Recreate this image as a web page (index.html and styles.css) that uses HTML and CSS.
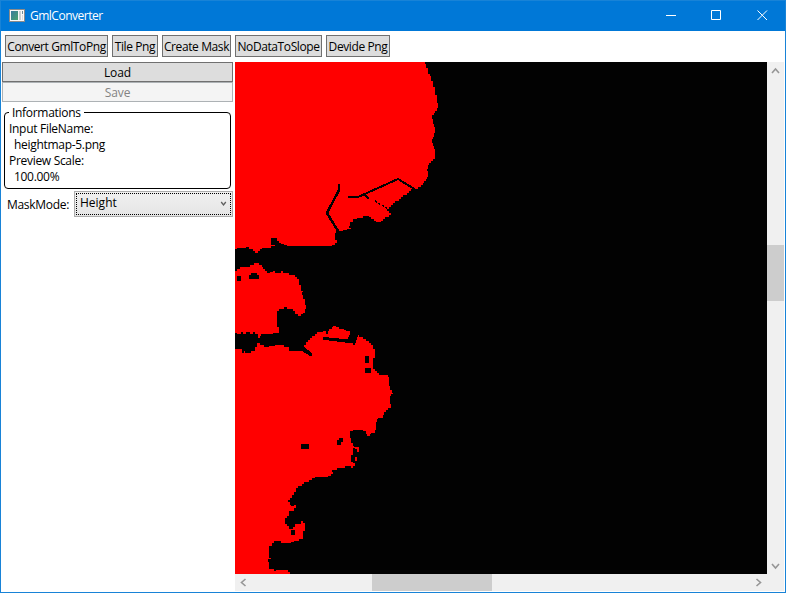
FILE: index.html
```
<!DOCTYPE html>
<html lang="en">
<head>
<meta charset="utf-8">
<title>GmlConverter</title>
<link rel="stylesheet" href="styles.css">
</head>
<body>
<div class="window">
  <header class="titlebar">
    <svg class="app-icon" width="16" height="14" viewBox="0 0 16 14" shape-rendering="crispEdges">
      <defs><linearGradient id="pane" x2="1" y2="1"><stop stop-color="#397b9e"/><stop offset="1" stop-color="#49a36f"/></linearGradient></defs>
      <path fill="#8b8b8b" d="M0 0h16v13H0z"/><path fill="#f8f8f8" d="M1 1h14v11H1z"/>
      <path fill="url(#pane)" d="M2 2h7v9H2z"/><path fill="#c9d0d2" d="M10 2h2v9h-2z"/><path fill="#6d8d98" d="M13 2h1v3h-1z"/><path fill="#dcdcdc" d="M13 6h1v5h-1z"/>
    </svg>
    <h1 class="title">GmlConverter</h1>
    <div class="caption-buttons">
      <svg viewBox="0 0 46 30" width="46" height="30"><path d="M10 14.500h10"/></svg>
      <svg viewBox="0 0 46 30" width="46" height="30"><path d="M9.500 9.500h9v9h-9z"/></svg>
      <svg viewBox="0 0 46 30" width="46" height="30"><path d="M9.500 9.500l9.500 9.500M19 9.500l-9.500 9.500"/></svg>
    </div>
  </header>
  <nav class="toolbar">
    <button class="tool convert">Convert GmlToPng</button>
    <button class="tool tile">Tile Png</button>
    <button class="tool mask">Create Mask</button>
    <button class="tool slope">NoDataToSlope</button>
    <button class="tool devide">Devide Png</button>
  </nav>
  <main class="content">
    <aside class="sidebar">
      <button class="wide load">Load</button>
      <button class="wide save" disabled>Save</button>
      <section class="group">
        <h2 class="legend"><span>Informations</span></h2>
        <p>Input FileName:</p>
        <p class="value">heightmap-5.png</p>
        <p>Preview Scale:</p>
        <p class="value">100.00%</p>
      </section>
      <div class="mode">
        <span class="mode-label">MaskMode:</span>
        <div class="combo"><span class="combo-text">Height</span>
          <svg class="chevron" width="7" height="6" viewBox="0 0 7 6"><path d="M1.200 1l2.300 3L5.800 1"/></svg>
        </div>
      </div>
    </aside>
    <section class="preview">
      <svg class="map" width="532" height="512" viewBox="235 62 532 512" shape-rendering="crispEdges">
        <path class="sea" d="M235 62h532v512H235z"/>
        <g class="land">
          <path d="M235 62H425V64H426V68H428V74H430V76H431V81H433V87H435V95H437V103H438V108H437V111H435V113H434V115H432V119H433V124H434V127H435V133H434V137H433V139H432V143H433V146H434V149H435V159H433V161H431V163H429V165H428V169H427V171H428V177H427V179H426V181H424V183H423V185H421V187H418V189H411V191H409V193H407V195H403V197H401V199H399V201H395V203H393V205H391V207H389V209H387V211H389V213H391V215H389V217H385V219H383V221H381V222H376V221H374V219H371V217H369V216H363V218H357V219H353V222H350V226H349V228H351V229H347V230H343V231H336V233H335V240H337V243H335V245H332V246H287V245H284V244H281V243H279V241H277V238H271V245H275V246H271V248H262V249H260V251H258V253H255V251H253V249H249V247H246V248H237V249H235Z"/>
          <path d="M235 271H237V269H240V267H250V265H254V263H259V265H262V267H263V269H265V271H267V273H270V272H273V271H275V273H281V271H283V273H289V275H295V277H297V279H299V285H301V291H303V292H302V295H303V299H305V305H306V309H305V313H303V314H301V316H298V314H295V311H293V309H287V307H284V309H279V311H277V327H279V333H273V334H261V336H260V338H258V334H255V332H253V334H250V332H246V334H243V332H241V334H237V333H235Z"/>
          <path d="M235 349H242V353H244V351H245V353H251V351H255V347H257V343H260V345H264V347H269V346H275V345H284V347H289V351H302L310 356H312V353L304 347V345H306V342H308V340H310V338H312V336H315V334H317V332H323V331H326V334H328V331H329V329H332V327H333V326H336V327H339V329H344V330H346V331H350V335H349V337H348V339H347V343H353V345H355V343H356V340H357V337H358V335H359V337H363V339H366V341H369V343H371V345H373V349H375V358H373V369H375V371H377V373H379V375H388V377H389V386H390V390H392V393H393V394H391V396H390V404H391V408H388V410H386V412H384V415H383V418H378V419H377V422H376V430H375V433H371V434H370V436H367V434H366V431H363V430H353V431H350V438H351V443H353V446H354V447H359V452H357V449H355V448H353V455H351V462H353V463H355V466H353V468H351V466H345V468H337V470H332V472H333V474H331V476H328V477H315V478H312V480H309V482H304V484H302V486H298V488H296V492H294V495H292V498H290V500H288V502H290V505H291V506H294V505H296V508H294V511H289V516H287V518H285V524H287V526H289V529H293V527H295V524H301V521H303V523H305V531H303V539H299V541H294V542H291V543H281V541H274V543H272V546H269V558H271V559H268V562H269V569H274V571H276V570H288V572H290V574H235Z"/>
          <path d="M355 457h2v4h-2z"/>
        </g>
        <g class="holes">
          <path d="M271 238h6v7h-6zM237 276h4v5h-4zM249 275h2v-2h6v2h2v4h-10zM365 356h4v7h-4zM365 368h6v5h-6zM301 444h8v5h-8zM339 438h4v4h-2v3h-4v-5h2zM291 530h4v5h-4z"/>
          <path d="M323 337H329V338H339V339H348V343H345V342H337V341H329V340H323Z"/>
        </g>
        <g class="roads">
          <path d="M339 184V190L327 213L338 231" stroke-width="2.500"/>
          <path d="M348 197H358L398 179L416 190" stroke-width="2"/>
          <path d="M361 195H365L369 199" stroke-width="1.700"/>
          <path d="M375 201L388 209" stroke-width="1.400" stroke-dasharray="2.500 1.500"/>
        </g>
      </svg>
      <div class="vbar">
        <svg width="18" height="17" viewBox="0 0 18 17"><path d="M5 11l3.500-4 3.500 4"/></svg>
        <div class="vthumb"></div>
        <svg width="18" height="17" viewBox="0 0 18 17"><path d="M5 7l3.500 4L12 7"/></svg>
      </div>
      <div class="hbar">
        <svg width="17" height="17" viewBox="0 0 17 17"><path d="M10.500 5l-4 3.500 4 3.500"/></svg>
        <div class="hthumb"></div>
        <svg width="17" height="17" viewBox="0 0 17 17"><path d="M6.500 5l4 3.500-4 3.500"/></svg>
      </div>
      <div class="corner"></div>
    </section>
  </main>
</div>
</body>
</html>
```
FILE: styles.css
```
* { box-sizing: border-box; }
body { margin: 0; background: #fff; font: 12px/16px "Open Sans", "Noto Sans", sans-serif; color: #000; overflow: hidden; }
h1, h2, p { margin: 0; font: inherit; }
button { font: inherit; color: inherit; padding: 0; margin: 0; border: 1px solid #707070; background: #ddd; white-space: nowrap; }
svg { display: block; flex: none; }
.window { width: 786px; height: 593px; border: 1px solid #1883d7; display: flex; flex-direction: column; }
.titlebar { height: 30px; background: #0078d7; color: #fff; display: flex; align-items: center; padding-left: 8px; flex: none; }
.title { margin-left: 5px; letter-spacing: -.5px; }
.caption-buttons { margin-left: auto; display: flex; }
.caption-buttons svg { width: 46px; transform: translateX(9px); }
.caption-buttons path { fill: none; stroke: #fff; }
.toolbar { height: 31px; padding: 4px 4px 5px; display: flex; gap: 4px; flex: none; }
.tool { height: 22px; display: flex; justify-content: center; align-items: center; letter-spacing: -.4px; padding-top: 2px; }
.convert { width: 103px; }
.tile { width: 46px; }
.mask { width: 69px; }
.slope { width: 87px; }
.devide { width: 64px; }
.content { display: flex; height: 530px; }
.sidebar { width: 234px; padding: 0 2px 0 1px; }
.wide { display: block; width: 231px; height: 20px; line-height: 17px; padding-top: 1px; letter-spacing: -.1px; }
.save { background: #f4f4f4; border-color: #adb2b5; color: #838383; }
.group { width: 227px; height: 77px; margin: 10px 0 0 2px; border: 1px solid #000; border-radius: 4px; padding: 0 4px; letter-spacing: -.3px; }
.legend { height: 8px; }
.legend span { display: inline-block; background: #fff; padding: 0 3px; transform: translateY(-8px); }
.value { padding-left: 5px; }
.mode { display: flex; margin-top: 2px; height: 26px; }
.mode-label { width: 72px; padding: 6px 0 0 5px; letter-spacing: -.3px; }
.combo { width: 159px; height: 26px; border: 1px solid #acacac; background: linear-gradient(#f0f0f0, #e5e5e5); padding: 3px 5px; display: flex; justify-content: space-between; outline: 1px dotted #000; outline-offset: -3px; }
.chevron { margin: 6px 0 0; }
.chevron path { fill: none; stroke: #606060; stroke-width: 1.300; }
.preview { display: grid; grid-template-columns: 532px 17px; grid-template-rows: 512px 17px; }
.sea { fill: #020202; }
.land { fill: #f00; }
.holes { fill: #020202; }
.roads { fill: none; stroke: #020202; }
.vbar, .hbar { background: #f0f0f0; display: flex; justify-content: space-between; }
.vbar { flex-direction: column; }
.vbar path, .hbar path { fill: none; stroke: #969696; stroke-width: 1.600; }
.vthumb { background: #cdcdcd; height: 56px; margin: 166px 0 auto; }
.hthumb { background: #cdcdcd; width: 120px; margin: 0 auto 0 120px; }
.corner { background: #f0f0f0; }
```
